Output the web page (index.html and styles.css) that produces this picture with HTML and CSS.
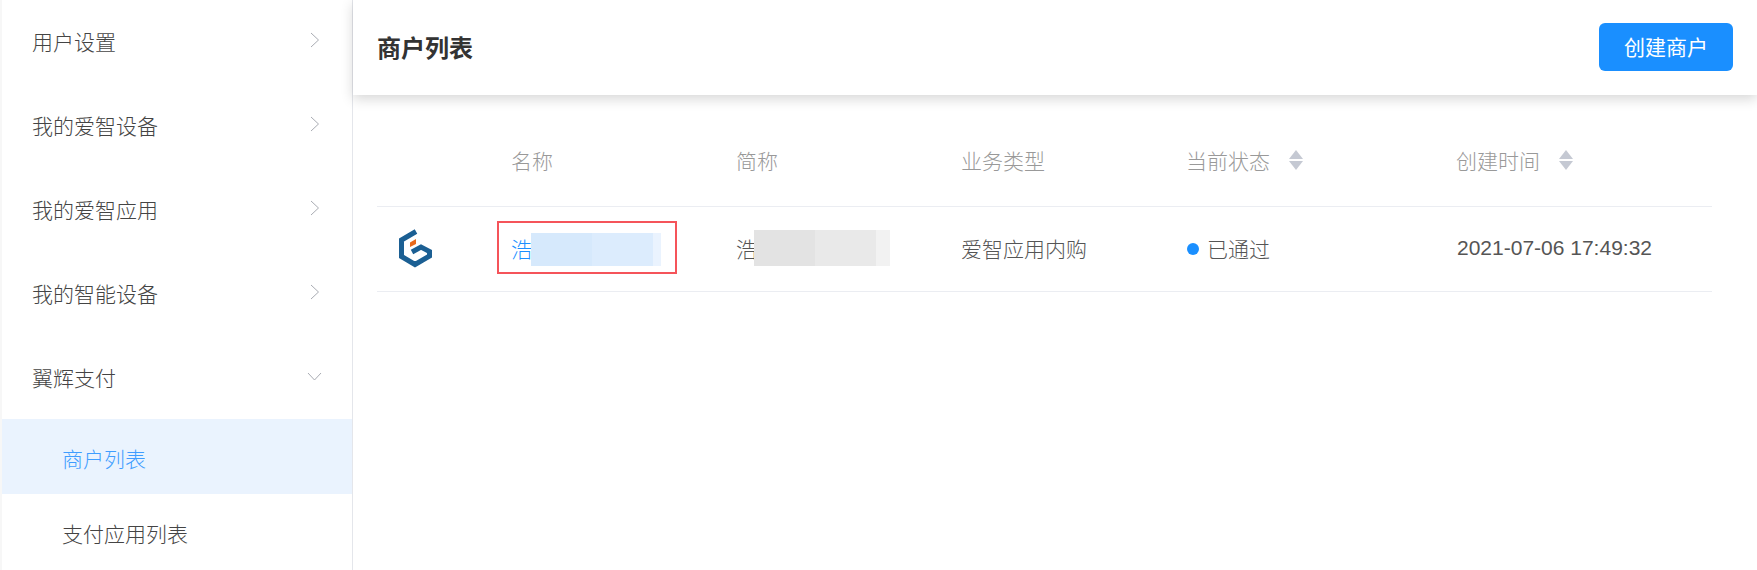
FILE: index.html
```html
<!DOCTYPE html>
<html lang="zh-CN">
<head>
    <meta charset="UTF-8">
    <title>商户列表</title>
    <link rel="stylesheet" href="styles.css">
</head>
<body>
    <div class="sidebar">
        <div class="menuItem"><span>用户设置</span><svg class="arrow" viewBox="0 0 10 16"><path d="M1 1l7.500 7L1 15"/></svg></div>
        <div class="menuItem"><span>我的爱智设备</span><svg class="arrow" viewBox="0 0 10 16"><path d="M1 1l7.500 7L1 15"/></svg></div>
        <div class="menuItem"><span>我的爱智应用</span><svg class="arrow" viewBox="0 0 10 16"><path d="M1 1l7.500 7L1 15"/></svg></div>
        <div class="menuItem"><span>我的智能设备</span><svg class="arrow" viewBox="0 0 10 16"><path d="M1 1l7.500 7L1 15"/></svg></div>
        <div class="menuItem"><span>翼辉支付</span><svg class="arrowDown" viewBox="0 0 15 10"><path d="M1 1l6.500 7L14 1"/></svg></div>
        <div class="subItem active">商户列表</div>
        <div class="subItem">支付应用列表</div>
    </div>
    <div class="main">
        <div class="header">
            <div class="title">商户列表</div>
            <button class="createBtn">创建商户</button>
        </div>
        <div class="table">
            <div class="row head">
                <div></div>
                <div>名称</div>
                <div>简称</div>
                <div>业务类型</div>
                <div class="sortable">当前状态<span class="sort"><i class="up"></i><i class="down"></i></span></div>
                <div class="sortable">创建时间<span class="sort"><i class="up"></i><i class="down"></i></span></div>
            </div>
            <div class="row">
                <div class="logoCell">
                    <svg class="logo" viewBox="13 14 35 40">
                        <path class="logoLine" d="M31 17.500L16.500 26V42.500L30 50.500L44.500 42V37.500L36 33L27 38"/>
                        <path class="logoDot" d="M25 28.500L31 25V30L25 33z"/>
                    </svg>
                </div>
                <div class="nameCell">
                    <span class="link">浩</span><span class="mask mask1"><i></i><i></i><i></i></span>
                    <div class="redBox"></div>
                </div>
                <div class="shortCell">浩<span class="mask mask2"><i></i><i></i><i></i></span></div>
                <div>爱智应用内购</div>
                <div class="status"><span class="dot"></span>已通过</div>
                <div class="date">2021-07-06 17:49:32</div>
            </div>
        </div>
    </div>
</body>
</html>
```

FILE: styles.css
```css
*{
    box-sizing: border-box;
}
html, body {
    margin: 0;
    height: 570px;
    overflow: hidden;
}
body {
    display: flex;
    background-color: #fff;
    color: #555;
    font-size: 21px;
    font-family: "Liberation Sans", Arial, "Noto Sans CJK SC", sans-serif;
    font-weight: 300;
    border-left: 2px solid #f7f7f7;
}
.sidebar {
    width: 351px;
    height: 570px;
    flex-shrink: 0;
    border-right: 1px solid #e4e6eb;
    color: #444;
}
.menuItem {
    height: 84px;
    padding: 0 32px 2px 30px;
    display: flex;
    align-items: center;
    justify-content: space-between;
}
.menuItem:nth-child(5) {
    height: 83px;
}
.arrow {
    width: 10px;
    height: 16px;
    margin-top: -3px;
    fill: none;
    stroke: #a9acb3;
    stroke-width: 1;
}
.arrowDown {
    width: 15px;
    height: 10px;
    margin: 0 -2px 0 0;
    fill: none;
    stroke: #a9acb3;
    stroke-width: 1;
}
.subItem {
    height: 75px;
    padding: 2px 0 0 60px;
    display: flex;
    align-items: center;
}
.subItem.active {
    background-color: #eaf3fe;
    color: #3f9dff;
}
.main {
    flex: 1;
    min-width: 0;
}
.header {
    height: 95px;
    padding: 0 24px 0 24px;
    display: flex;
    align-items: center;
    justify-content: space-between;
    box-shadow: 0 4px 12px rgba(0, 0, 0, .16);
}
.title {
    margin-bottom: 3px;
    font-size: 24px;
    font-weight: 700;
    color: #333;
}
.createBtn {
    width: 134px;
    height: 48px;
    margin-bottom: 1px;
    padding: 0 0 2px;
    border: 0;
    border-radius: 6px;
    background-color: #1a8fff;
    color: #fff;
    font: inherit;
    font-weight: 400;
}
.table {
    margin: 0 45px 0 24px;
}
.row {
    display: grid;
    grid-template-columns: 134px 225px 225px 225px 270px 1fr;
    align-items: center;
    height: 85px;
    padding-bottom: 3px;
    border-bottom: 1px solid #ebedf2;
}
.head {
    height: 112px;
    padding: 19px 0 0;
    color: #999;
}
.sortable {
    display: flex;
    align-items: center;
}
.sort {
    margin-left: 19px;
    display: flex;
    flex-direction: column;
    gap: 2px;
}
.sort i {
    display: block;
    width: 0;
    height: 0;
    border-left: 7px solid transparent;
    border-right: 7px solid transparent;
}
.sort .up {
    border-bottom: 9px solid #c5c9d3;
}
.sort .down {
    border-top: 9px solid #c5c9d3;
}
.logoCell {
    padding-left: 21px;
    display: flex;
}
.logo {
    width: 35px;
    height: 40px;
}
.logoLine {
    fill: none;
    stroke: #1b5f93;
    stroke-width: 5;
}
.logoDot {
    fill: #ea6a1c;
}
.nameCell, .shortCell {
    position: relative;
    display: flex;
    align-items: center;
}
.link {
    color: #1a8fff;
}
.mask {
    display: flex;
}
.mask i {
    display: block;
}
.mask1 {
    height: 33px;
    margin: 3px 0 0 -1px;
}
.mask1 i:nth-child(1) { width: 61px; background-color: #d6e9fc; }
.mask1 i:nth-child(2) { width: 61px; background-color: #dcecfd; }
.mask1 i:nth-child(3) { width: 8px; background-color: #eaf3fe; }
.mask2 {
    height: 36px;
    margin: 0 0 0 -3px;
}
.mask2 i:nth-child(1) { width: 61px; background-color: #e3e3e3; }
.mask2 i:nth-child(2) { width: 61px; background-color: #e9e9e9; }
.mask2 i:nth-child(3) { width: 14px; background-color: #f2f2f2; }
.redBox {
    position: absolute;
    left: -14px;
    top: -9px;
    width: 180px;
    height: 53px;
    border: 2px solid #f5545a;
}
.status {
    display: flex;
    align-items: center;
}
.dot {
    width: 12px;
    height: 12px;
    margin: 3px 8px 0 1px;
    border-radius: 50%;
    background-color: #1a8fff;
}
.date {
    padding-left: 1px;
}
```
